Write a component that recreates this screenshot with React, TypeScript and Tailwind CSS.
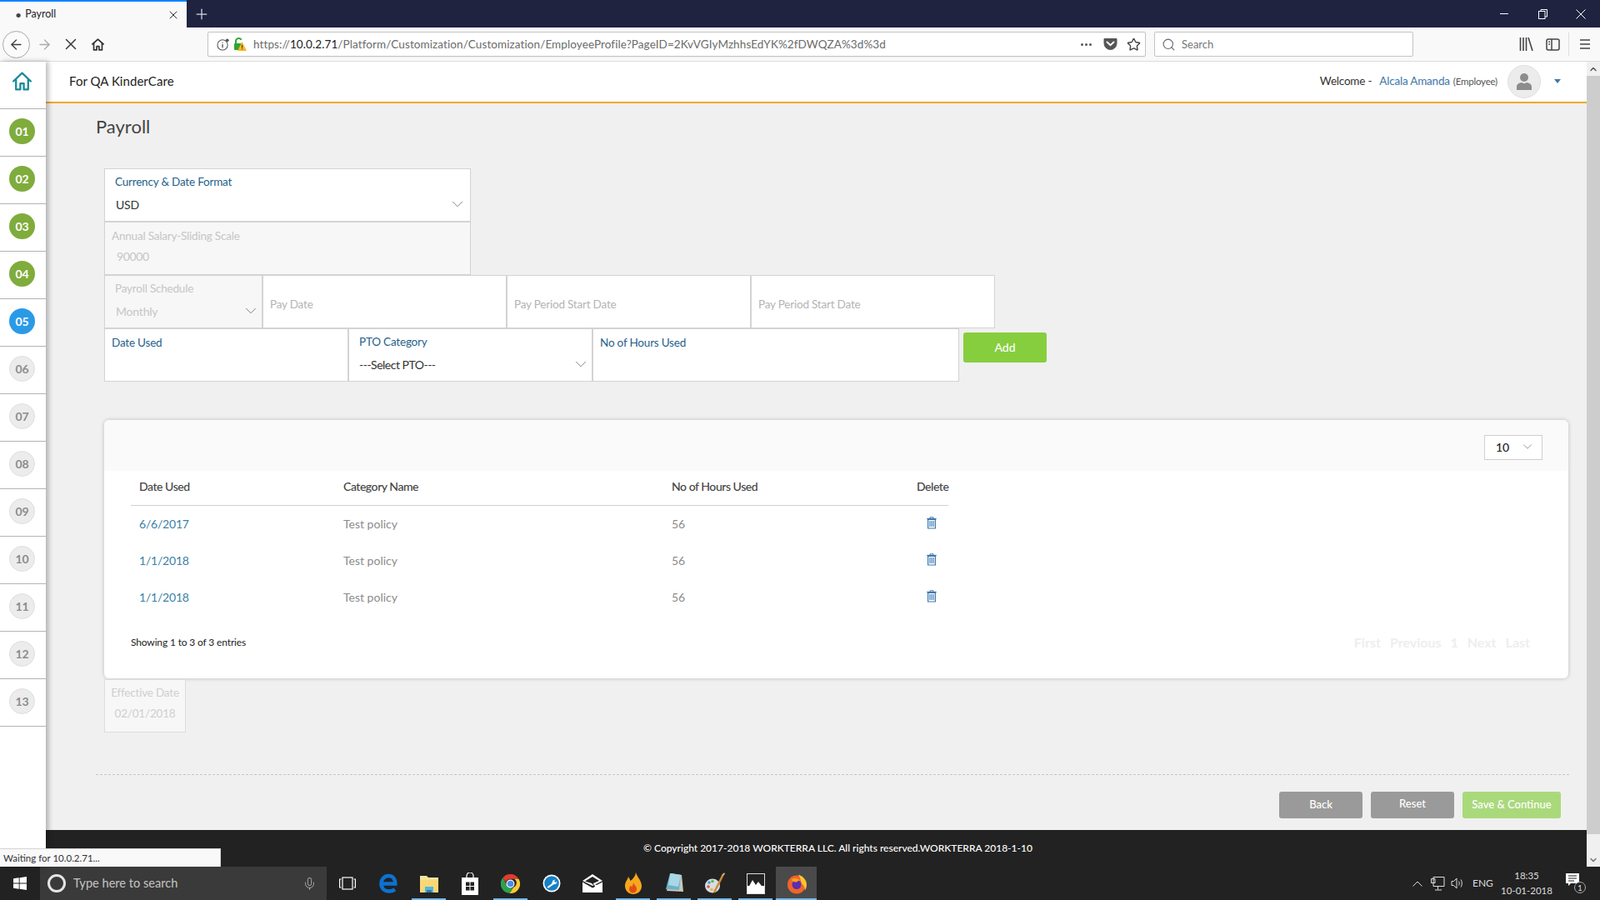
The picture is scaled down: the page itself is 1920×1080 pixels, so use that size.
import React from "react";
import { ArrowLeft, ArrowRight, X, Plus, Search, Star, ChevronDown, ChevronUp, Mic } from "lucide-react";

const Chev = ({ size = 22 }: { size?: number }) => <ChevronDown size={size} strokeWidth={1} className="text-[#777] shrink-0" />;

function HomeGlyph({ size, color, sw }: { size: number; color: string; sw: number }) {
  return (
    <svg width={size} height={size} viewBox="0 0 24 24" fill="none" stroke={color} strokeWidth={sw} strokeLinejoin="round" strokeLinecap="round">
      <path d="M2 12 12 2.500 22 12" />
      <path d="M5 10v11.500h5v-7h4v7h5V10" />
    </svg>
  );
}

function TitleBar() {
  return (
    <div className="flex h-[33px] bg-[#1f2340] items-stretch">
      <div className="w-[224px] bg-[#f9f9fa] border-t-2 border-[#0a84ff] flex items-center pl-[18px] pr-[8px]">
        <span className="text-[#444] text-[14px] leading-none mr-[4px]">•</span>
        <span className="text-[12.5px] text-[#222] flex-1">Payroll</span>
        <X size={16} strokeWidth={1.5} className="text-[#333]" />
      </div>
      <div className="w-[36px] flex items-center justify-center">
        <Plus size={20} strokeWidth={1.5} className="text-[#d8d8e0]" />
      </div>
      <div className="flex-1" />
      <div className="flex items-center text-white">
        <div className="w-[46px] flex justify-center">
          <div className="w-[10px] h-px bg-white" />
        </div>
        <div className="w-[46px] flex justify-center">
          <svg width="11" height="12" viewBox="0 0 11 12" fill="none" stroke="#fff" strokeWidth="1">
            <rect x="0.500" y="2.500" width="7.500" height="9" />
            <path d="M3 2.500V.5h7.500v8.500H8" />
          </svg>
        </div>
        <div className="w-[46px] flex justify-center">
          <svg width="12" height="12" viewBox="0 0 12 12" stroke="#fff" strokeWidth="1">
            <path d="M.5.5l11 11M11.500.5l-11 11" />
          </svg>
        </div>
      </div>
    </div>
  );
}

function Toolbar() {
  return (
    <div className="flex h-[41px] bg-[#f9f9fa] border-b border-[#dcdcde] items-center text-[#3d3d3d]">
      <div className="w-[33px] h-[33px] ml-[3px] rounded-full border border-[#a8a8a8] bg-[#fbfbfb] flex items-center justify-center">
        <ArrowLeft size={19} strokeWidth={1.6} />
      </div>
      <div className="w-[34px] flex justify-center">
        <ArrowRight size={19} strokeWidth={1.6} className="text-[#aaa]" />
      </div>
      <div className="w-[30px] flex justify-center">
        <X size={22} strokeWidth={1.7} />
      </div>
      <div className="w-[34px] flex justify-center">
        <svg width="17" height="17" viewBox="0 0 24 24" fill="none" stroke="#333" strokeWidth="2.400" strokeLinejoin="round">
          <path d="M2 12 12 3l10 9" />
          <path d="M5 10v11h5v-6h4v6h5V10" />
        </svg>
      </div>
      <div className="ml-[115px] w-[1126px] h-[30px] bg-white border border-[#c4c4c4] rounded-[2px] flex items-center shadow-[0_1px_1px_rgba(0,0,0,0.05)]">
        <div className="w-[16px] ml-[10px] flex items-center">
          <svg width="17" height="17" viewBox="0 0 17 17" fill="none" stroke="#555">
            <circle cx="7.500" cy="9" r="6.500" strokeWidth="1.100" />
            <path d="M7.500 8v4.500M7.500 5.500v1.200" strokeWidth="1.400" />
            <circle cx="13.500" cy="3" r="2" fill="#555" stroke="none" />
          </svg>
        </div>
        <div className="w-[18px] ml-[4px]">
          <svg width="16" height="18" viewBox="0 0 16 18">
            <path d="M3 9V5.500a3.500 3.500 0 0 1 6.600-1.600" fill="none" stroke="#2fa52f" strokeWidth="2" />
            <rect x="1" y="8" width="10" height="8" rx="1" fill="#2fa52f" />
            <path d="M10.500 6 16 17H5z" fill="#f2b62a" />
            <path d="M10.500 10v3.500M10.500 14.500v1" stroke="#3a3000" strokeWidth="1" />
          </svg>
        </div>
        <div className="ml-[6px] text-[13.5px] tracking-[0.1px] text-[#6b6b6b] whitespace-nowrap w-[990px] [font-family:'Open_Sans',sans-serif]">
          https://<span className="text-[#222]">10.0.2.71</span>/Platform/Customization/Customization/EmployeeProfile?PageID=2KvVGIyMzhhsEdYK%2fDWQZA%3d%3d
        </div>
        <div className="flex-1" />
        <div className="flex items-center pr-[5px]">
          <span className="flex gap-[2px]">
            <span className="w-[3px] h-[3px] rounded-full bg-[#555]" />
            <span className="w-[3px] h-[3px] rounded-full bg-[#555]" />
            <span className="w-[3px] h-[3px] rounded-full bg-[#555]" />
          </span>
          <svg className="ml-[14px]" width="17" height="16" viewBox="0 0 17 16">
            <path d="M1 1.500h15V7a7.500 7.500 0 0 1-15 0z" fill="#555" stroke="#555" strokeLinejoin="round" />
            <path d="M4.500 5.500l4 3.700 4-3.700" fill="none" stroke="#fff" strokeWidth="2" strokeLinecap="round" />
          </svg>
          <Star size={17} strokeWidth={2} className="text-[#444] ml-[11px]" />
        </div>
      </div>
      <div className="ml-[10px] w-[311px] h-[30px] bg-white border border-[#c4c4c4] rounded-[2px] flex items-center pl-[8px] gap-[7px]">
        <Search size={17} strokeWidth={1.5} className="text-[#666]" />
        <span className="text-[13px] text-[#777] pt-[1px] [font-family:'Open_Sans',sans-serif]">Search</span>
      </div>
      <div className="flex-1" />
      <div className="flex items-center text-[#444]">
        <svg width="17" height="16" viewBox="0 0 17 16" stroke="#444" strokeWidth="1.600" fill="none">
          <path d="M1.500 0v16M5 0v16M8.500 0v16M11 0l5 16" />
        </svg>
        <svg className="ml-[15px]" width="17" height="15" viewBox="0 0 17 15" fill="none" stroke="#444" strokeWidth="1.500">
          <rect x="1" y="1" width="15" height="13" rx="2" />
          <path d="M7 1v13M3.300 4.200h1.700M3.300 7h1.700" />
        </svg>
        <div className="ml-[10px] w-px h-[28px] bg-[#dedede]" />
        <svg className="ml-[12px] mr-[11px]" width="14" height="14" viewBox="0 0 14 14" stroke="#444" strokeWidth="1.700">
          <path d="M1 2h12M1 7h12M1 12h12" />
        </svg>
      </div>
    </div>
  );
}

function Step({ n, state }: { n: string; state: "done" | "active" | "todo" }) {
  const cls =
    state === "done"
      ? "bg-[#7fac3c] text-white"
      : state === "active"
        ? "bg-[#2b9ae6] text-white"
        : "bg-[#ececec] border border-[#dedede] text-[#8c8c8c]";
  return (
    <div className="h-[57px] border-b border-[#b4b4b4] pt-[11px] pr-[2px] flex justify-center items-start">
      <div className={`w-[31px] h-[31px] rounded-full flex items-center justify-center text-[14px] font-bold ${cls}`}>{n}</div>
    </div>
  );
}

function Sidebar() {
  const steps = ["01", "02", "03", "04", "05", "06", "07", "08", "09", "10", "11", "12", "13"];
  return (
    <div className="w-[55px] bg-white shrink-0 relative z-10 shadow-[3px_0_6px_rgba(0,0,0,0.28)]">
      <div className="h-[57px] border-b border-[#b4b4b4] flex justify-center pt-[11px] pr-[2px] items-start">
        <HomeGlyph size={25} color="#1c8a98" sw={2.2} />
      </div>
      {steps.map((s, i) => (
        <Step key={s} n={s} state={i < 4 ? "done" : i === 4 ? "active" : "todo"} />
      ))}
    </div>
  );
}

function Header() {
  return (
    <div className="h-[50px] bg-white border-b-2 border-[#f0a823] flex items-center pl-[28px] pb-[1px] shrink-0">
      <span className="text-[15px] text-[#222] tracking-[0.05px]">For QA KinderCare</span>
      <div className="flex-1" />
      <span className="text-[13.5px] text-[#333] tracking-[-0.2px]">Welcome -</span>
      <span className="text-[13.5px] text-[#3e78a8] ml-[9px] tracking-[-0.2px]">Alcala Amanda</span>
      <span className="text-[11.5px] text-[#555] ml-[4px] tracking-[-0.2px] pt-[1px]">(Employee)</span>
      <div className="w-[40px] h-[40px] rounded-full bg-[#ececec] border border-[#e0e0e0] ml-[12px] flex items-center justify-center">
        <svg width="20" height="22" viewBox="0 0 20 22" fill="#8d8d8d">
          <circle cx="10" cy="6" r="5" />
          <path d="M1 21v-4c0-3 3-4.500 6-5 2 1.500 4 1.500 6 0 3 .5 6 2 6 5v4z" />
        </svg>
      </div>
      <div className="ml-[16px] mr-[31px] w-0 h-0 border-l-[4px] border-r-[4px] border-t-[5px] border-l-transparent border-r-transparent border-t-[#3e78a8]" />
    </div>
  );
}

const labelBlue = "h-[20px] leading-[20px] text-[13.5px] text-[#1f5f8b] tracking-[-0.2px] whitespace-nowrap";
const labelGray = "h-[20px] leading-[20px] text-[13.5px] text-[#c6c6c6] tracking-[-0.2px] whitespace-nowrap";
const boxBase = "h-[64px] border border-[#d3d3d3] shrink-0";

function Form() {
  return (
    <div className="ml-[70px] mt-[36px]">
      <div className={`${boxBase} w-[440px] bg-white pt-[5px] pl-[12px]`}>
        <div className={labelBlue}>Currency &amp; Date Format</div>
        <div className="mt-[7px] h-[20px] flex items-center justify-between pr-[4px] pl-px text-[14px] text-[#333] tracking-[-0.2px]">
          USD
          <Chev />
        </div>
      </div>
      <div className={`${boxBase} w-[440px] bg-[#f7f7f7] pt-[6px] pl-[8px]`}>
        <div className={labelGray}>Annual Salary-Sliding Scale</div>
        <div className="mt-[5px] h-[20px] leading-[20px] pl-[6px] text-[14px] text-[#c6c6c6] tracking-[-0.4px]">90000</div>
      </div>
      <div className="flex">
        <div className={`${boxBase} w-[190px] bg-[#f7f7f7] pt-[5px] pl-[12px]`}>
          <div className={labelGray}>Payroll Schedule</div>
          <div className="mt-[7px] h-[20px] flex items-center justify-between pr-[2px] pl-px text-[14px] text-[#c6c6c6] tracking-[-0.2px]">
            Monthly
            <Chev />
          </div>
        </div>
        <div className={`${boxBase} w-[293px] bg-white flex items-center pl-[8px] pt-[7px] text-[13.5px] text-[#b4b4b4] tracking-[-0.2px]`}>Pay Date</div>
        <div className={`${boxBase} w-[293px] bg-white flex items-center pl-[8px] pt-[7px] text-[13.5px] text-[#b4b4b4] tracking-[-0.2px]`}>Pay Period Start Date</div>
        <div className={`${boxBase} w-[293px] bg-white flex items-center pl-[8px] pt-[7px] text-[13.5px] text-[#b4b4b4] tracking-[-0.2px]`}>Pay Period Start Date</div>
      </div>
      <div className="flex items-start">
        <div className={`${boxBase} w-[293px] bg-white pt-[6px] pl-[8px]`}>
          <div className={labelBlue}>Date Used</div>
        </div>
        <div className={`${boxBase} w-[293px] bg-white pt-[5px] pl-[12px]`}>
          <div className={labelBlue}>PTO Category</div>
          <div className="mt-[7px] h-[20px] flex items-center justify-between pr-[2px] text-[14px] text-[#333] tracking-[-0.5px]">
            ---Select PTO---
            <Chev />
          </div>
        </div>
        <div className={`${boxBase} w-[440px] bg-white pt-[6px] pl-[8px]`}>
          <div className={labelBlue}>No of Hours Used</div>
        </div>
        <button className="ml-[5px] mt-[5px] w-[100px] h-[36px] rounded-[3px] bg-[#86ce3e] text-white text-[14px] font-medium pb-[1px]">Add</button>
      </div>
    </div>
  );
}

function Trash() {
  return (
    <svg width="12" height="15" viewBox="0 0 12 15" fill="none" stroke="#3f78b0">
      <path d="M4 2V.8h4V2" strokeWidth="1" />
      <path d="M.3 2.600h11.400" strokeWidth="1.500" />
      <path d="M1.600 3.400h8.800V14H1.600z" strokeWidth="1.200" />
      <path d="M3.900 5v7M6 5v7M8.100 5v7" strokeWidth="1.100" />
    </svg>
  );
}

function Card() {
  const rows = ["6/6/2017", "1/1/2018", "1/1/2018"];
  const cols = "grid grid-cols-[245px_393px_294px_49px]";
  return (
    <div className="ml-[70px] mt-[46px] w-[1757px] h-[310px] rounded-[6px] bg-white shadow-[0_0_5px_rgba(0,0,0,0.22)] overflow-hidden shrink-0">
      <div className="h-[61px] bg-[#fafafa] flex justify-end items-start pt-[18px] pr-[31px]">
        <div className="w-[70px] h-[30px] bg-white border border-[#cfcfcf] flex items-center justify-between pl-[13px] pr-[8px] pb-[2px] text-[14px] text-[#222] font-medium">
          10
          <Chev size={18} />
        </div>
      </div>
      <div className="mx-[32px] w-[981px]">
        <div className={`${cols} h-[42px] border-b border-[#d2d2d2] items-center text-[14px] font-medium text-[#444] tracking-[-0.45px] pb-[4px]`}>
          <div className="pl-[10px]">Date Used</div>
          <div className="pl-[10px]">Category Name</div>
          <div className="pl-[11px]">No of Hours Used</div>
          <div className="pl-[11px]">Delete</div>
        </div>
        {rows.map((d, i) => (
          <div key={i} className={`${cols} h-[44px] items-center text-[14px] pb-[2px]`}>
            <div className="pl-[10px] text-[#3d80a8] tracking-[-0.2px]">{d}</div>
            <div className="pl-[10px] text-[#8c8c8c]">Test policy</div>
            <div className="pl-[11px] text-[#8c8c8c]">56</div>
            <div className="pl-[23px] flex pb-[1px]">
              <Trash />
            </div>
          </div>
        ))}
      </div>
      <div className="mt-[17px] h-[30px] flex items-center justify-between pl-[32px] pr-[46px]">
        <span className="text-[12px] text-[#222] tracking-[-0.15px]">Showing 1 to 3 of 3 entries</span>
        <div className="flex gap-[11px] text-[16px] font-bold text-[#eeeeee]">
          <span>First</span>
          <span>Previous</span>
          <span>1</span>
          <span>Next</span>
          <span>Last</span>
        </div>
      </div>
    </div>
  );
}

function Bottom() {
  return (
    <>
      <div className="ml-[70px] mt-px w-[98px] h-[64px] bg-[#f7f7f7] border border-[#dcdcdc] text-[13.5px] text-[#cfcfcf] text-center tracking-[-0.2px] pt-[5px] shrink-0">
        <div className="h-[20px] leading-[20px]">Effective Date</div>
        <div className="mt-[5px] h-[20px] leading-[20px]">02/01/2018</div>
      </div>
      <div className="ml-[60px] mt-[50px] w-[1768px] border-t border-dashed border-[#c8c8c8] shrink-0" />
      <div className="mt-[20px] flex justify-end gap-[10px] pr-[31px] text-white text-[13px] font-medium">
        <button className="w-[100px] h-[32px] rounded-[3px] bg-[#9a9a9a]">Back</button>
        <button className="w-[100px] h-[32px] rounded-[3px] bg-[#9a9a9a] pb-[3px]">Reset</button>
        <button className="w-[118px] h-[32px] rounded-[3px] bg-[#aad97c]">Save &amp; Continue</button>
      </div>
    </>
  );
}

function Scrollbar() {
  return (
    <div className="w-[16px] bg-[#f0f0f0] flex flex-col shrink-0">
      <div className="h-[17px] flex items-center justify-center">
        <ChevronUp size={12} strokeWidth={3} className="text-[#555]" />
      </div>
      <div className="h-[910px] bg-[#cdcdcd]" />
      <div className="flex-1" />
      <div className="h-[17px] flex items-center justify-center">
        <ChevronDown size={12} strokeWidth={3} className="text-[#777]" />
      </div>
    </div>
  );
}

function TaskIcon({ children, under, active }: { children: React.ReactNode; under?: boolean; active?: boolean }) {
  return (
    <div className={`w-[49px] h-full flex items-center justify-center relative shrink-0 ${active ? "bg-[#4a4a4a]" : ""}`}>
      {children}
      {under && <div className="absolute left-[4px] right-[4px] bottom-0 h-[2px] bg-[#76b9ed]" />}
      {active && <div className="absolute left-0 right-0 bottom-0 h-[2px] bg-[#76b9ed]" />}
    </div>
  );
}

function Taskbar() {
  return (
    <div className="h-[40px] bg-[#222] flex items-stretch text-white [font-family:'Open_Sans',sans-serif]">
      <div className="w-[48px] flex items-center justify-center">
        <svg width="16" height="16" viewBox="0 0 16 16" fill="#fff">
          <path d="M0 2.300 6.700 1.300v6.300H0zM7.600 1.200 16 0v7.600H7.600zM0 8.500h6.700v6.300L0 13.800zM7.600 8.500H16V16l-8.400-1.200z" />
        </svg>
      </div>
      <div className="w-[344px] bg-[#3a3a3a] flex items-center pl-[9px]">
        <div className="w-[22px] h-[22px] rounded-full border-[3px] border-[#e6e6e6]" />
        <span className="ml-[9px] text-[14.6px] text-[#c4c4c4] flex-1">Type here to search</span>
        <Mic size={17} strokeWidth={1.2} className="text-[#bbb] mr-[12px]" />
      </div>
      <TaskIcon>
        <svg width="20" height="16" viewBox="0 0 20 16" fill="none" stroke="#fff" strokeWidth="1.200">
          <rect x="4" y="1" width="12" height="14" />
          <path d="M2.500 3H.6v10h1.900M17.500 3h1.900v10h-1.900" />
        </svg>
      </TaskIcon>
      <TaskIcon>
        <svg width="22" height="24" viewBox="0 0 22 24" fill="none" stroke="#0c72d3" strokeWidth="4.500">
          <path d="M2.800 12.500h16.500c0-6-3.500-9.500-8-9.500-5 0-8.800 4-8.800 9.500S6.500 21.500 12 21.500c2.800 0 5-.8 7-2" />
        </svg>
      </TaskIcon>
      <TaskIcon under>
        <svg width="22" height="22" viewBox="0 0 22 22">
          <path d="M0 2h8l2 2h12v18H0z" fill="#f5e39a" />
          <rect x="0" y="7" width="22" height="15" fill="#f8d775" />
          <path d="M6 15h10v7h-3v-3H9v3H6z" fill="#53b6de" />
          <rect x="8" y="19" width="6" height="3" fill="#2b7fa8" />
        </svg>
      </TaskIcon>
      <TaskIcon>
        <svg width="22" height="27" viewBox="0 0 22 27">
          <path d="M7 7V4a4 4 0 0 1 8 0v3" fill="none" stroke="#fff" strokeWidth="1.200" />
          <path d="M1 6h20v21H1z" fill="#fff" />
          <path d="M6 11.500h4.500v4.500H6zM11.500 11.500H16v4.500h-4.500zM6 17h4.500v4.500H6zM11.500 17H16v4.500h-4.500z" fill="#222" />
        </svg>
      </TaskIcon>
      <TaskIcon under>
        <svg width="23" height="23" viewBox="0 0 24 24">
          <path d="M12 0a12 12 0 0 1 10.400 6H12a6 6 0 0 0-5.700 4.100L2.500 4.400A12 12 0 0 1 12 0z" fill="#e33b2e" />
          <path d="M22.400 6A12 12 0 0 1 11 24l4.800-7.500a6 6 0 0 0 1.200-10.500z" fill="#fcc934" />
          <path d="M2.500 4.400 7.200 13a6 6 0 0 0 8.600 3.500L11 24A12 12 0 0 1 2.500 4.400z" fill="#2fa04d" />
          <circle cx="12" cy="12" r="4.600" fill="#4a8af0" stroke="#fff" strokeWidth="1.200" />
        </svg>
      </TaskIcon>
      <TaskIcon>
        <svg width="22" height="22" viewBox="0 0 22 22">
          <circle cx="11" cy="11" r="10.500" fill="#fff" />
          <circle cx="11" cy="11" r="8.800" fill="#1780c6" />
          <path d="M5.500 15.500 11 11.500l1.500-4 3-1-1.500 2 1.500 1.500 2-1.500-1 3-3.500 1L7 16.800z" fill="#fff" />
        </svg>
      </TaskIcon>
      <TaskIcon>
        <svg width="24" height="22" viewBox="0 0 24 22">
          <path d="M0 8 12 0l12 8-12 6z" fill="#fff" />
          <path d="M0 9.500v12.500h24V9.500L17 13l-3-1 1 3L12 16.500z" fill="#fff" />
          <path d="M3 8.500 12 3l8 5-7 3 1 3-3-3z" fill="#222" />
        </svg>
      </TaskIcon>
      <TaskIcon under>
        <svg width="20" height="26" viewBox="0 0 20 26">
          <path d="M13 0C15 6 20 10 20 16.500 20 22 15.500 26 10 26S0 22 0 16c0-5 3-7 4-11 1 2 2 3 2.500 5C10 7.500 12.500 4 13 0z" fill="#f6a71d" />
          <path d="M10 12c1 3 4 4.500 4 8a4.500 4.500 0 0 1-9 0c0-2 1-3 2-4.500.5 1 1 1.500 1.500 2 .5-2 1.500-3.500 1.500-5.500z" fill="#e04e15" />
        </svg>
      </TaskIcon>
      <TaskIcon under>
        <svg width="22" height="26" viewBox="0 0 22 26">
          <path d="M7 1 20 3l2 20-20-1z" fill="#c9c9b8" />
          <path d="M6 1 19 3l-2 18L1 20z" fill="#6fb1c9" />
          <path d="M6.500 1 19 3l-3 14L4 15z" fill="#a8d8e8" />
        </svg>
      </TaskIcon>
      <TaskIcon under>
        <svg width="24" height="26" viewBox="0 0 24 26">
          <ellipse cx="9" cy="16" rx="9" ry="8.500" fill="#d5dde3" />
          <circle cx="5" cy="12" r="1.800" fill="#3a9ad9" />
          <circle cx="9" cy="10.500" r="1.800" fill="#66b84a" />
          <circle cx="4" cy="17" r="1.800" fill="#e2533f" />
          <circle cx="8" cy="20.500" r="1.800" fill="#eeb52f" />
          <path d="M11 24 22 2" stroke="#c98a3a" strokeWidth="2.500" />
          <path d="M20 4l3-4 1 2z" fill="#e2c28a" />
        </svg>
      </TaskIcon>
      <TaskIcon under>
        <svg width="22" height="25" viewBox="0 0 22 25">
          <rect x="0.500" y="0.500" width="21" height="24" fill="#fff" stroke="#ddd" />
          <rect x="1" y="1" width="20" height="14" fill="#222" />
          <path d="M1 19 7 8l4 6 3-4 7 9v5H1z" fill="#fff" />
        </svg>
      </TaskIcon>
      <TaskIcon active>
        <svg width="24" height="25" viewBox="0 0 24 24">
          <circle cx="12" cy="13" r="11" fill="#f0652a" />
          <path d="M14 1c6 2 10 7 10 12 0 3-1 5-2 7 0-3-1-6-4-8-1-4-2-8-4-11z" fill="#fcc52e" />
          <circle cx="12" cy="13" r="5.500" fill="#5a2fb0" />
          <path d="M6 7c4-3 9-1 10 2-2-1-3 0-4 1-2 0-5 0-6-3z" fill="#f9a11b" />
        </svg>
      </TaskIcon>
      <div className="flex-1" />
      <div className="flex items-center">
        <svg width="12" height="7" viewBox="0 0 12 7" fill="none" stroke="#ddd" strokeWidth="1">
          <path d="M.5 6.500 6 1l5.500 5.500" />
        </svg>
        <svg className="ml-[10px]" width="17" height="17" viewBox="0 0 17 17" fill="none" stroke="#ddd">
          <path d="M3 .5h13v11H3zM.5 2.500v5H5v-5zM8.500 11.500v4M5 16h8" />
        </svg>
        <svg className="ml-[7px]" width="14" height="16" viewBox="0 0 14 16" fill="none" stroke="#ddd">
          <path d="M1 5.500h2.500L7 2v12L3.500 10.500H1zM9.500 5.500c1 1.500 1 3.500 0 5M12 3.500c1.800 2.500 1.800 6.500 0 9" />
        </svg>
        <span className="ml-[12px] w-[24px] text-[12px] text-[#ddd] whitespace-nowrap">ENG</span>
        <div className="ml-[6px] w-[70px] text-[11.5px] text-center text-[#ddd] leading-[18px] whitespace-nowrap">
          <div>18:35</div>
          <div>10-01-2018</div>
        </div>
        <div className="ml-[12px] mr-[17px] w-[24px] relative h-[24px]">
          <svg width="16" height="16" viewBox="0 0 16 16" fill="#fff">
            <path d="M0 0h16v12H6l-3 3v-3H0z" />
            <path d="M3 3h10M3 6h10M3 9h7" stroke="#222" strokeWidth="1.200" />
          </svg>
          <div className="absolute right-0 bottom-0 w-[14px] h-[14px] rounded-full bg-[#222] border border-[#aaa] text-[10px] leading-[12px] text-center text-[#ddd]">1</div>
        </div>
      </div>
    </div>
  );
}

export default function App() {
  return (
    <div className="w-[1920px] h-[1080px] overflow-hidden relative flex flex-col [font-family:Lato,sans-serif] bg-[#f0f0f0]">
      <div className="[font-family:'Open_Sans',sans-serif]">
        <TitleBar />
        <Toolbar />
      </div>
      <div className="flex h-[966px]">
        <Sidebar />
        <div className="flex-1 flex flex-col bg-[#f0f0f0] min-w-0">
          <Header />
          <div className="flex-1 flex flex-col min-h-0">
            <h1 className="ml-[60px] mt-[14px] h-[28px] leading-[28px] text-[22px] text-[#444]">Payroll</h1>
            <Form />
            <Card />
            <Bottom />
          </div>
          <div className="h-[44px] bg-[#222] text-white text-[12px] font-medium flex items-center justify-center pl-[52px] shrink-0">
            © Copyright 2017-2018 WORKTERRA LLC. All rights reserved.WORKTERRA 2018-1-10
          </div>
        </div>
        <Scrollbar />
      </div>
      <Taskbar />
      <div className="absolute left-0 top-[1018px] w-[265px] h-[22px] z-20 bg-[#f9f9fa] border-t border-r border-[#d4d4d4] pl-[4px] text-[11.5px] leading-[21px] text-[#333] [font-family:'Open_Sans',sans-serif]">
        Waiting for 10.0.2.71...
      </div>
    </div>
  );
}
